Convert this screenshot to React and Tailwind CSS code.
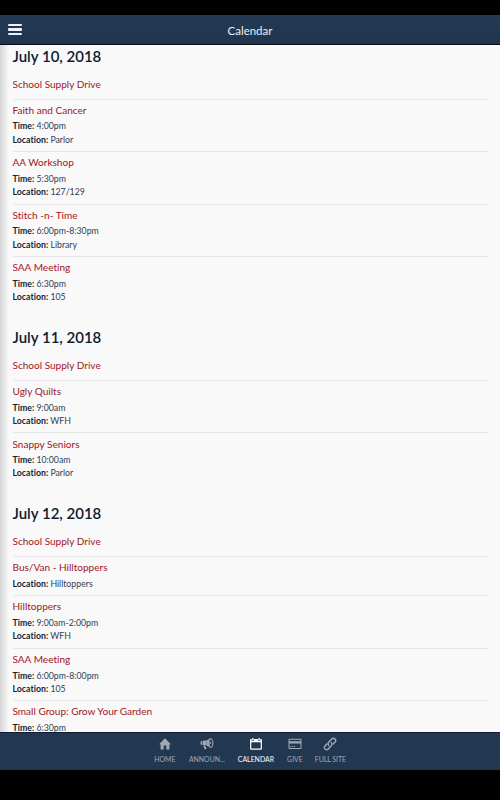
const days = [
  {
    date: "July 10, 2018",
    events: [
      { title: "School Supply Drive" },
      { title: "Faith and Cancer", time: "4:00pm", location: "Parlor" },
      { title: "AA Workshop", time: "5:30pm", location: "127/129" },
      { title: "Stitch -n- Time", time: "6:00pm-8:30pm", location: "Library" },
      { title: "SAA Meeting", time: "6:30pm", location: "105" },
    ],
  },
  {
    date: "July 11, 2018",
    events: [
      { title: "School Supply Drive" },
      { title: "Ugly Quilts", time: "9:00am", location: "WFH" },
      { title: "Snappy Seniors", time: "10:00am", location: "Parlor" },
    ],
  },
  {
    date: "July 12, 2018",
    events: [
      { title: "School Supply Drive" },
      { title: "Bus/Van - Hilltoppers", location: "Hilltoppers" },
      { title: "Hilltoppers", time: "9:00am-2:00pm", location: "WFH" },
      { title: "SAA Meeting", time: "6:00pm-8:00pm", location: "105" },
      { title: "Small Group: Grow Your Garden", time: "6:30pm" },
    ],
  },
];

// ================= ICONS =================
const HomeIcon = () => (
  <svg viewBox="0 0 14 14" className="size-3.5" fill="currentColor">
    <path d="M7 1.3 12.9 7.2H11.4V12.6H8.3V8.6H5.7V12.6H2.6V7.2H1.1Z" />
  </svg>
);

const MegaphoneIcon = () => (
  <svg viewBox="0 0 14 14" className="size-3.5" fill="currentColor">
    <path d="M.6 4.4 2.2 4V8L.6 7.6ZM2.8 3.8 6 3.6V8.2L2.8 8ZM3.1 8.6 5.3 8.7 6.5 12.1 4.8 12.6Z" />
    <path
      fillRule="evenodd"
      d="M6.3 3.5C8 3 9.1 2.1 10.3 1.1 11.8.7 13.4 3.1 13.4 6S12 11.3 10.5 11C9.2 9.7 8 8.8 6.3 8.4ZM10.8 2.2C9.9 2.2 9.4 3.9 9.4 6S10 9.9 10.9 9.9 12.3 8.1 12.3 6 11.7 2.2 10.8 2.2Z"
    />
    <path d="M9.8 4.8C10.6 4.8 11 5.3 11 6S10.6 7.2 9.8 7.2Z" />
  </svg>
);

const CalendarIcon = () => (
  <svg viewBox="0 0 14 14" className="size-3.5" fill="currentColor">
    <path d="M3.2.9H4.6V3.2H3.2ZM9.4.9H10.8V3.2H9.4Z" />
    <path
      fillRule="evenodd"
      d="M1.8 2.1H2.7V3.7H5.1V2.1H8.9V3.7H11.3V2.1H12.2Q12.9 2.1 12.9 2.8V12Q12.9 12.7 12.2 12.7H1.8Q1.1 12.7 1.1 12V2.8Q1.1 2.1 1.8 2.1ZM2.3 5.3V11.5H11.7V5.3Z"
    />
  </svg>
);

const CardIcon = () => (
  <svg viewBox="0 0 14 14" className="size-3.5" fill="currentColor">
    <path
      fillRule="evenodd"
      d="M1.3 1.7H12.7Q13.5 1.7 13.5 2.5V11.2Q13.5 12 12.7 12H1.3Q.5 12 .5 11.2V2.5Q.5 1.7 1.3 1.7ZM1.5 2.7V4.3H12.5V2.7ZM1.5 6.6V11H12.5V6.6Z"
    />
    <path d="M2.3 8.9H3.5V10.1H2.3ZM4.2 8.9H5.3V10.1H4.2ZM6 8.9H7V10.1H6Z" />
  </svg>
);

const LinkIcon = () => (
  <svg
    viewBox="0 0 14 14"
    className="size-3.5"
    fill="none"
    stroke="currentColor"
    strokeWidth="1.4"
    strokeLinecap="round"
  >
    <path d="M5.7 8.4C4.9 7.5 4.9 6.1 5.7 5.2L8.8 2C9.7 1.1 11.2 1.1 12 1.9S12.9 4.2 12 5.1L10.2 6.9" />
    <path d="M8.3 5.6C9.1 6.5 9.1 7.9 8.3 8.8L5.2 12C4.3 12.9 2.8 12.9 2 12.1S1.1 9.8 2 8.9L3.8 7.1" />
  </svg>
);

const tabs = [
  { label: "HOME", icon: HomeIcon, width: "w-[39px]" },
  { label: "ANNOUN...", icon: MegaphoneIcon, width: "w-[45px]" },
  { label: "CALENDAR", icon: CalendarIcon, width: "w-[53px]", active: true },
  { label: "GIVE", icon: CardIcon, width: "w-[25px]" },
  { label: "FULL SITE", icon: LinkIcon, width: "w-[46px]" },
];

function Detail({ label, value }) {
  return (
    <p className="text-[8.75px] leading-[13.2px] text-[#324056]">
      <span className="font-bold text-[#141f35]">{label}:</span> {value}
    </p>
  );
}

function Event({ event, last }) {
  const hasDetails = event.time || event.location;

  return (
    <>
      <div className={hasDetails ? "pt-[3.1px] pb-[5.4px]" : "pt-[3px] pb-[7px]"}>
        <h3 className="text-[10.05px] leading-[15px] text-[#a01624]">{event.title}</h3>
        {hasDetails && (
          <div className="pt-[1.6px]">
            {event.time && <Detail label="Time" value={event.time} />}
            {event.location && <Detail label="Location" value={event.location} />}
          </div>
        )}
      </div>
      {!last && <hr className="h-px border-0 bg-[#e6e6e8]" />}
    </>
  );
}

export default function App() {
  return (
    <div className="flex h-[800px] w-[500px] flex-col overflow-hidden bg-black pt-[15px] pb-[30px] font-['Lato',sans-serif] [font-variant-ligatures:none]">
      {/* Header */}
      <header className="grid h-[30px] shrink-0 grid-cols-[1fr_auto_1fr] items-center border-b border-[#080d18] bg-linear-to-b from-[#243a54] to-[#20364f] px-2">
        <button className="flex w-3.5 flex-col gap-[2.2px]" aria-label="Menu">
          <span className="h-[2.4px] rounded-[1px] bg-[#eef1f5]" />
          <span className="h-[2.4px] rounded-[1px] bg-[#eef1f5]" />
          <span className="h-[2.4px] rounded-[1px] bg-[#eef1f5]" />
        </button>
        <h1 className="pt-[3px] text-[11.5px] text-[#eceff3]">Calendar</h1>
      </header>

      {/* Calendar list */}
      <main className="min-h-0 flex-1 overflow-hidden bg-[#f9f9f9] bg-linear-to-r from-[#d6d6d7] to-[#f9f9f9] to-[9px] pr-3 pl-[12.5px]">
        {days.map((day) => (
          <section key={day.date} className="pb-[17.4px]">
            <h2 className="pb-[6.8px] text-[15px] leading-[22px] font-semibold text-[#101a2e]">
              {day.date}
            </h2>
            {day.events.map((event, i) => (
              <Event key={event.title} event={event} last={i === day.events.length - 1} />
            ))}
          </section>
        ))}
      </main>

      {/* Tab bar */}
      <nav className="flex h-[38px] shrink-0 justify-center border-t border-[#101b36] bg-[#223850] pr-[1.2px]">
        {tabs.map(({ label, icon: Icon, width, active }) => (
          <div
            key={label}
            className={`flex flex-col items-center pt-1 ${width} ${
              active ? "text-white" : "text-[#a0a9b7]"
            }`}
          >
            <Icon />
            <span className="mt-[3.6px] text-[6.9px] leading-[9px] whitespace-nowrap">{label}</span>
          </div>
        ))}
      </nav>
    </div>
  );
}
